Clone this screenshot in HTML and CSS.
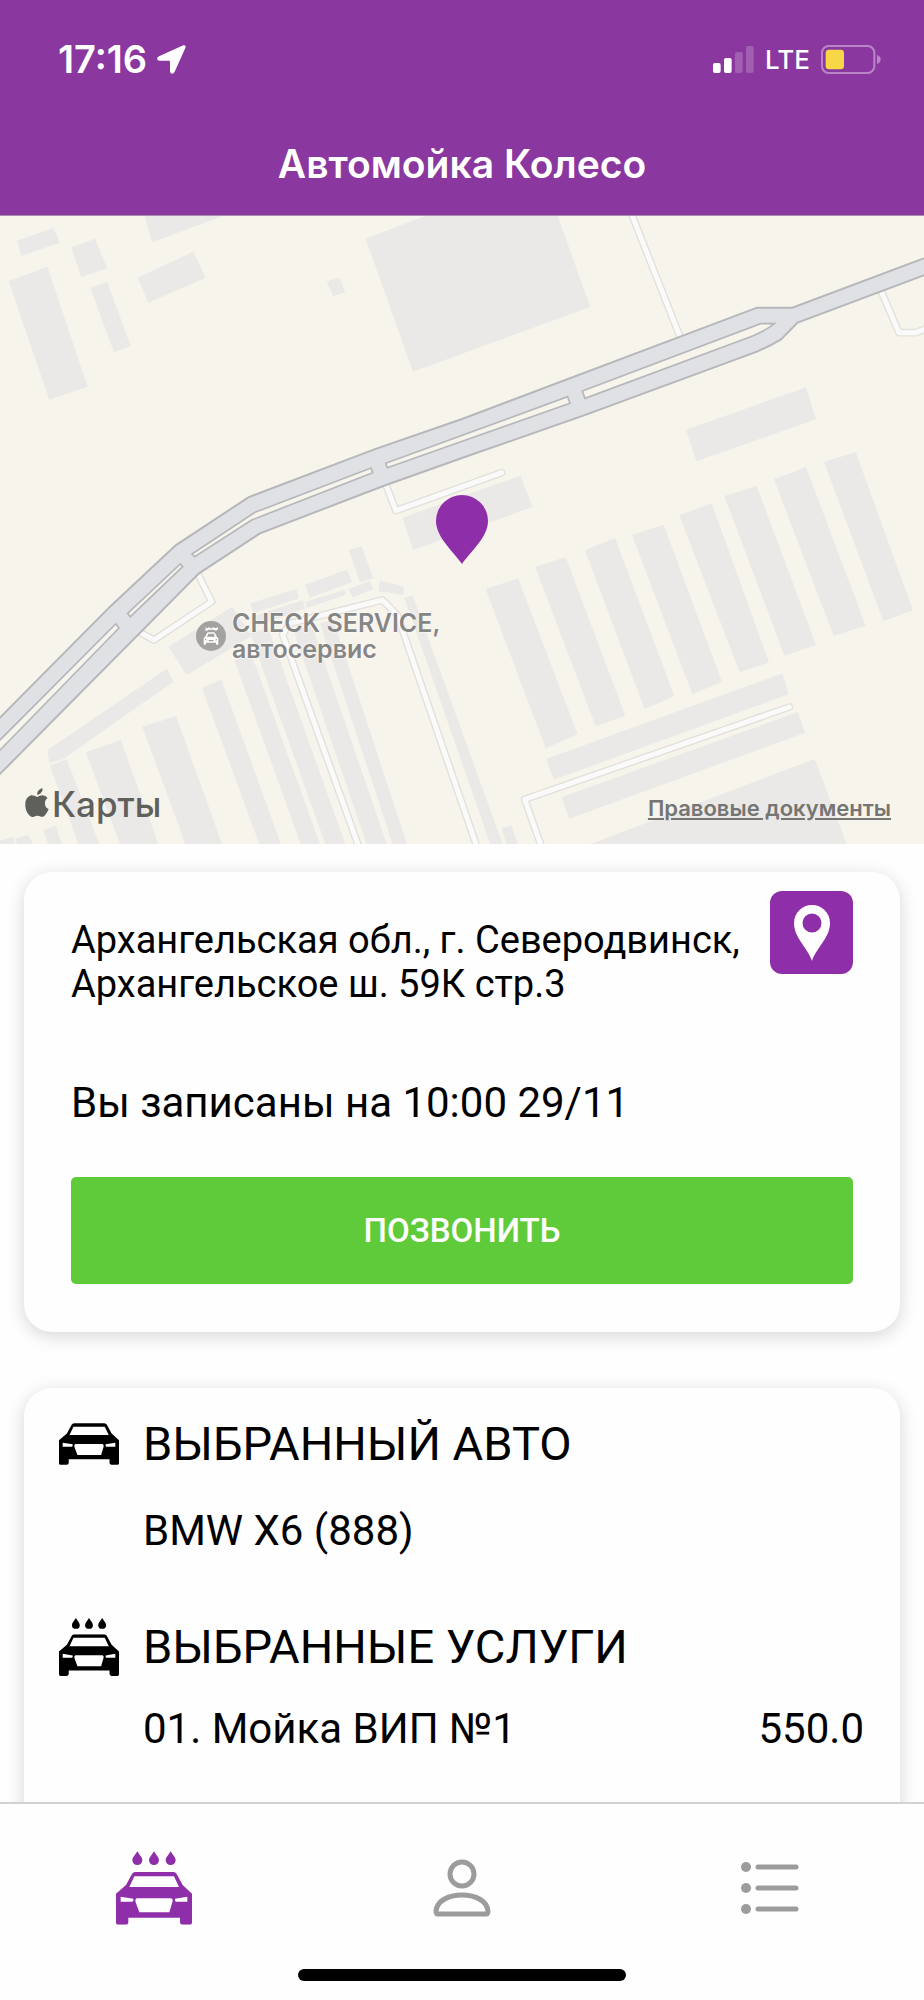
FILE: index.html
```
<!DOCTYPE html>
<html lang="ru">
<head>
    <meta charset="UTF-8">
    <meta name="viewport" content="width=device-width, initial-scale=1.0">
    <title>Автомойка Колесо</title>
    <link rel="stylesheet" href="styles.css">
</head>
<body>
    <svg class="sprite" aria-hidden="true">
        <symbol id="car" viewBox="48 97 228 158">
            <path fill-rule="evenodd" d="M48 162L78 136L96 103Q99 97 106 97H220Q227 97 230 103L248 136L276 162V249Q276 255 270 255H248Q240 255 240 247V234H85V247Q85 255 77 255H54Q48 255 48 249ZM103 110L88 142H237L222 110ZM62 171V186H97Q101 185 100 177ZM262 171V186H228Q224 185 225 177ZM110 176Q104 179 107 188L118 218H208L217 188Q220 179 214 176Z"/>
        </symbol>
        <symbol id="carwash" viewBox="48 35 228 220">
            <path d="M112 35C118 46 127 53 127 62A15 14 0 0 1 97 62C97 53 106 46 112 35ZM162 35C168 46 177 53 177 62A15 14 0 0 1 147 62C147 53 156 46 162 35ZM212 35C218 46 227 53 227 62A15 14 0 0 1 197 62C197 53 206 46 212 35Z"/>
            <use href="#car" x="48" y="97" width="228" height="158"/>
        </symbol>
    </svg>

    <header class="header">
        <div class="status">
            <span class="time">17:16</span>
            <svg class="arrow" viewBox="0 0 87 87">
                <path d="M79 1Q88 0 85 9L53 80Q50 87 44 86Q39 85 39 79V50Q39 47 36 47H8Q1 47 0 42Q0 37 6 34Z"/>
            </svg>
            <svg class="signal" viewBox="0 0 123 81">
                <rect y="51" width="23" height="30" rx="6"/>
                <rect x="33" y="36" width="23" height="45" rx="6"/>
                <rect class="off" x="66" y="18" width="23" height="63" rx="6"/>
                <rect class="off" x="99" width="23" height="81" rx="6"/>
            </svg>
            <span class="network">LTE</span>
            <svg class="battery" viewBox="0 0 180 87">
                <rect class="shell" x="3" y="3" width="157" height="81" rx="20"/>
                <rect class="level" x="14" y="14" width="55" height="59" rx="10"/>
                <path class="cap" d="M168 30Q179 34 179 43.500Q179 53 168 57Z"/>
            </svg>
        </div>
        <h1 class="title">Автомойка Колесо</h1>
    </header>

    <main class="content">
        <section class="map">
            <svg class="map-canvas" viewBox="0 18 2772 1884">
                <g class="buildings">
                    <path d="M52 92L160 54L180 98L64 137Z"/>
                    <path d="M26 214L142 170L263 530L148 569Z"/>
                    <path d="M213 112L285 86L321 175L244 201Z"/>
                    <path d="M271 234L321 215L392 408L342 427Z"/>
                    <path d="M434 18H668L457 97Z"/>
                    <path d="M413 203L580 125L617 203L445 278Z"/>
                    <path d="M980 214L1019 203L1036 247L1000 259Z"/>
                    <path d="M1097 86L1275 18H1673L1771 291L1239 485Z"/>
                    <path d="M1208 923L1561 797L1598 891L1239 1020Z"/>
                    <path d="M2058 659L2418 532L2448 628L2089 754Z"/>
                    <path d="M1457 1137L1554 1105L1733 1573L1637 1615Z"/>
                    <path d="M1606 1071L1697 1041L1876 1517L1787 1549Z"/>
                    <path d="M1755 1021L1845 984L2023 1458L1934 1497Z"/>
                    <path d="M1896 975L1991 944L2166 1416L2077 1452Z"/>
                    <path d="M2038 916L2135 880L2307 1357L2219 1387Z"/>
                    <path d="M2173 858L2270 828L2448 1305L2353 1337Z"/>
                    <path d="M2322 808L2418 771L2597 1247L2501 1278Z"/>
                    <path d="M2472 756L2567 726L2739 1201L2650 1233Z"/>
                    <path d="M1638 1647L2348 1390L2365 1453L1662 1709Z"/>
                    <path d="M1684 1762L2393 1506L2416 1568L1708 1826Z"/>
                    <path d="M1771 1902L2444 1647L2540 1902Z"/>
                    <path d="M1504 1853L1535 1847L1553 1902H1519Z"/>
                    <path d="M1213 1163L1238 1156L1508 1902H1471Z"/>
                    <path d="M1140 1111L1212 1130L1210 1154L1135 1144Z"/>
                    <path d="M1046 1020L1085 1009L1120 1105L1080 1117Z"/>
                    <path d="M916 1124L1040 1079L1057 1116L929 1163Z"/>
                    <path d="M1045 1138L1109 1112L1120 1137L1058 1162Z"/>
                    <path d="M916 1176L1033 1139L1038 1154L921 1194Z"/>
                    <path d="M750 1180L890 1137L896 1165L760 1210Z"/>
                    <path d="M763 1218L908 1170L915 1195L780 1245Z"/>
                    <path d="M505 1310L697 1190L755 1278L560 1395Z"/>
                    <path d="M142 1621L500 1376L520 1415L188 1648L148 1658Z"/>
                    <path d="M150 1667L200 1648L298 1902H235Z"/>
                    <path d="M258 1627L362 1590L475 1902H360Z"/>
                    <path d="M427 1550L528 1518L666 1902H556Z"/>
                    <path d="M606 1433L664 1409L843 1902H778Z"/>
                    <path d="M703 1350L755 1335L960 1902H902Z"/>
                    <path d="M750 1270L805 1255L1036 1902H976Z"/>
                    <path d="M880 1260L935 1245L1160 1902H1100Z"/>
                    <path d="M960 1240L1000 1230L1221 1902H1178Z"/>
                    <path d="M129 1860L167 1847L186 1902H145Z"/>
                    <path d="M46 1886L84 1874L100 1902H52Z"/>
                    <path d="M0 1892L40 1880L45 1902H0Z"/>
                </g>
                <g class="lane-edge">
                    <path d="M1890 0L2042 385M2646 250L2697 368H2748L2790 350"/>
                    <path d="M1158 825L1188 902L1505 788"/>
                    <path d="M595 1095L635 1175L462 1290L410 1262"/>
                    <path d="M1082 1926L848 1274L870 1240L1147 1170L1192 1215L1436 1926"/>
                    <path d="M2368 1491L1574 1768L1630 1926"/>
                </g>
                <g class="lane">
                    <path d="M1890 0L2042 385M2646 250L2697 368H2748L2790 350"/>
                    <path d="M1158 825L1188 902L1505 788"/>
                    <path d="M595 1095L635 1175L462 1290L410 1262"/>
                    <path d="M1082 1926L848 1274L870 1240L1147 1170L1192 1215L1436 1926"/>
                    <path d="M2368 1491L1574 1768L1630 1926"/>
                </g>
                <path class="road" d="M-20 1543L330 1190L527 1006L745 862L1123 718L1386 627L2271 293H2377L2790 138V189L2393 338L2343 388Q2310 408 2273 424L1750 617L1386 744L1150 828L780 970L597 1090L-20 1712Z"/>
                <g class="median">
                    <path d="M-20 1610L347 1242L357 1254L-20 1641Z"/>
                    <path d="M383 1210L541 1062L548 1070L391 1220Z"/>
                    <path d="M576 1032L765 907L1113 774L1118 788L755 930L584 1040Z"/>
                    <path d="M1157 760L1703 560L1710 580L1162 773Z"/>
                    <path d="M1747 543L2282 341H2323Q2300 360 2258 378L1755 565Z"/>
                </g>
                <path class="pin" d="M1386 1062C1360 1024 1308 982 1308 933A78 78 0 0 1 1464 933C1464 982 1412 1024 1386 1062Z"/>
            </svg>
            <div class="poi">
                <svg class="poi-icon" viewBox="0 0 90 90">
                    <circle cx="45" cy="45" r="45"/>
                    <path fill="#fff" fill-rule="evenodd" d="M27 48L32 38Q34 34 38 34H52Q56 34 58 38L63 48L67 52V69Q67 71 65 71H62Q60 71 60 69V65H30V69Q30 71 28 71H25Q23 71 23 69V52ZM37 38L33 47H57L53 38ZM27 53V58H34ZM63 53V58H56ZM37 57L39 61H51L53 57Z"/>
                    <path fill="#fff" d="M26 18L31 21H36L39 18L43 22H48L52 18L56 21H61L65 18Q68 23 64 27Q60 30 56 28L52 26H38L34 29Q28 30 25 26L31 25Z"/>
                </svg>
                <p class="poi-name">CHECK SERVICE,<br>автосервис</p>
            </div>
            <div class="maps-logo">
                <svg class="apple" viewBox="0 0 72 90">
                    <path d="M53 1Q54 10 47 16Q42 21 36 20Q36 11 42 6Q47 2 53 1ZM37 27Q43 22 52 22Q62 22 68 30Q59 36 60 47Q60 58 71 63Q67 74 60 82Q55 88 48 86Q37 81 27 86Q19 90 12 81Q0 67 1 47Q2 27 18 22Q26 21 37 27Z"/>
                </svg>
                <span>Карты</span>
            </div>
            <a class="legal" href="#">Правовые документы</a>
        </section>

        <section class="card booking">
            <div class="address-row">
                <p class="address">Архангельская обл., г. Северодвинск, Архангельское ш. 59К стр.3</p>
                <button class="route" aria-label="Показать маршрут">
                    <svg viewBox="0 0 36 56">
                        <path fill-rule="evenodd" d="M18 56C14 43 0 33 0 18A18 18 0 0 1 36 18C36 33 22 43 18 56ZM18 8.500A9.500 9.500 0 1 0 18 27.500A9.500 9.500 0 1 0 18 8.500Z"/>
                    </svg>
                </button>
            </div>
            <p class="booked">Вы записаны на 10:00 29/11</p>
            <button class="call">ПОЗВОНИТЬ</button>
        </section>

        <section class="card order">
            <svg class="order-icon"><use href="#car"/></svg>
            <h2>ВЫБРАННЫЙ АВТО</h2>
            <p class="order-line car-name">BMW X6 (888)</p>
            <svg class="order-icon wash"><use href="#carwash"/></svg>
            <h2>ВЫБРАННЫЕ УСЛУГИ</h2>
            <p class="order-line"><span>01. Мойка ВИП №1</span><span>550.0</span></p>
        </section>
    </main>

    <nav class="tabs">
        <div class="tab-row">
            <a class="tab active" href="#" aria-label="Мойка">
                <svg class="tab-wash"><use href="#carwash"/></svg>
            </a>
            <a class="tab" href="#" aria-label="Профиль">
                <svg class="tab-icon" viewBox="0 0 58 58">
                    <circle cx="29" cy="15" r="12"/>
                    <path d="M5 55Q3 55 3 52C4 42 15 36 29 36S54 42 55 52Q55 55 53 55Z"/>
                </svg>
            </a>
            <a class="tab" href="#" aria-label="Список">
                <svg class="tab-icon" viewBox="0 0 58 58">
                    <path d="M17 8H55M17 29H55M17 50H55"/>
                    <g class="dots"><circle cx="5" cy="8" r="5"/><circle cx="5" cy="29" r="5"/><circle cx="5" cy="50" r="5"/></g>
                </svg>
            </a>
        </div>
        <div class="home-bar"></div>
    </nav>
</body>
</html>
```

FILE: styles.css
```
* {
    box-sizing: border-box;
}

body {
    margin: 0;
    height: 100vh;
    display: flex;
    flex-direction: column;
    background-color: #fefefe;
    color: #000;
    font-family: Roboto, sans-serif;
}

h1, h2, p {
    margin: 0;
    font-weight: 400;
}

button {
    border: 0;
    padding: 0;
    font-family: inherit;
    cursor: pointer;
}

svg {
    display: block;
    flex: none;
}

.sprite {
    position: absolute;
    width: 0;
    height: 0;
}

/* header */
.header {
    flex: none;
    padding-bottom: 5px;
    border-bottom: 1px solid #a98fb0;
    background-color: #8a389f;
    color: #fff;
    font-family: Inter, sans-serif;
}

.status {
    display: flex;
    align-items: center;
    height: 118px;
    padding: 0 43px 0 58px;
}

.time {
    font-size: 38px;
    font-weight: 600;
}

.arrow {
    width: 29px;
    height: 29px;
    margin-left: 10px;
    fill: #fff;
}

.signal {
    width: 41px;
    height: 27px;
    margin-left: auto;
    fill: #fff;
}

.signal .off {
    opacity: 0.2;
}

.network {
    margin: 0 11px;
    font-size: 26px;
    font-weight: 500;
}

.battery {
    width: 60px;
    height: 29px;
}

.shell {
    fill: none;
    stroke: #b985c6;
    stroke-width: 6;
}

.level {
    fill: #f8d747;
}

.cap {
    fill: #b985c6;
}

.title {
    line-height: 92px;
    font-size: 39px;
    font-weight: 600;
    text-align: center;
}

/* content */
.content {
    flex: 1;
    min-height: 0;
    overflow-x: hidden;
    overflow-y: auto;
    scrollbar-width: none;
}

.map {
    position: relative;
    background-color: #f7f4ec;
    font-family: Inter, sans-serif;
}

.map-canvas {
    width: 100%;
    height: auto;
}

.buildings {
    fill: #eae9e7;
}

.lane-edge,
.lane {
    fill: none;
    stroke-linecap: round;
    stroke-linejoin: round;
}

.lane-edge {
    stroke: #e2e0da;
    stroke-width: 23;
}

.lane {
    stroke: #fafafa;
    stroke-width: 15;
}

.road {
    fill: #e0e1e5;
    stroke: #b6b7ba;
    stroke-width: 6;
}

.median {
    fill: #f7f4ec;
    stroke: #b6b7ba;
    stroke-width: 5;
}

.pin {
    fill: #8e2fa9;
}

.poi {
    position: absolute;
    left: 196px;
    top: 394px;
    display: flex;
    align-items: center;
    gap: 6px;
}

.poi-icon {
    width: 30px;
    height: 30px;
    fill: #a3a2a0;
}

.poi-name {
    font-size: 25px;
    font-weight: 600;
    line-height: 26px;
    color: #868685;
    text-shadow: 0 0 2px #fff, 0 0 2px #fff;
}

.maps-logo {
    position: absolute;
    left: 25px;
    bottom: 18px;
    display: flex;
    align-items: center;
    gap: 3px;
    font-size: 35px;
    font-weight: 500;
    line-height: 44px;
    color: #5f5f5b;
}

.apple {
    width: 24px;
    height: 30px;
    margin-bottom: 2px;
    fill: #5f5f5b;
}

.legal {
    position: absolute;
    right: 33px;
    bottom: 23px;
    font-size: 22px;
    font-weight: 600;
    line-height: 26px;
    color: #757574;
}

.card {
    margin: 28px 24px 56px;
    border-radius: 28px;
    background-color: #fefefe;
    box-shadow: 0 4px 18px rgba(0, 0, 0, 0.16);
}

.booking {
    padding: 19px 47px 48px;
}

.address-row {
    display: flex;
    align-items: flex-start;
    justify-content: space-between;
}

.address {
    padding-top: 27px;
    font-size: 38px;
    line-height: 44px;
}

.route {
    display: flex;
    flex: none;
    align-items: center;
    justify-content: center;
    width: 83px;
    height: 83px;
    border-radius: 12px;
    background-color: #8e2fa9;
}

.route svg {
    width: 36px;
    height: 56px;
    fill: #fff;
}

.booked {
    margin: 72px 0 49px;
    font-size: 42px;
    line-height: 50px;
}

.call {
    display: block;
    width: 100%;
    height: 107px;
    border-radius: 5px;
    background-color: #5fcb3a;
    color: #fff;
    font-size: 33px;
    font-weight: 500;
}

.order {
    display: grid;
    grid-template-columns: 60px 1fr;
    column-gap: 24px;
    align-items: center;
    min-height: 700px;
    align-content: start;
    padding: 28px 36px 28px 35px;
}

.order h2 {
    font-size: 47px;
    line-height: 56px;
}

.order-icon {
    width: 60px;
    height: 42px;
}

.wash {
    height: 58px;
}

.order-line {
    grid-column: 2;
    display: flex;
    justify-content: space-between;
    margin-top: 28px;
    font-size: 42px;
    line-height: 50px;
}

.car-name {
    margin-top: 34px;
    margin-bottom: 62px;
}

/* tab bar */
.tabs {
    flex: none;
    padding-bottom: 19px;
    border-top: 2px solid #d2d2d2;
    background-color: #fefefe;
}

.tab-row {
    display: grid;
    grid-template-columns: repeat(3, 1fr);
    height: 165px;
    padding-bottom: 5px;
}

.tab {
    display: flex;
    align-items: center;
    justify-content: center;
    padding-top: 7px;
}

.active {
    fill: #8e2fa9;
}

.tab-wash {
    width: 76px;
    height: 74px;
}

.tab-icon {
    width: 58px;
    height: 58px;
    fill: none;
    stroke: #9c9c9c;
    stroke-width: 5;
    stroke-linecap: round;
}

.dots {
    fill: #9c9c9c;
    stroke: none;
}

.home-bar {
    width: 328px;
    height: 12px;
    margin: 0 auto;
    border-radius: 6px;
    background-color: #000;
}
```
